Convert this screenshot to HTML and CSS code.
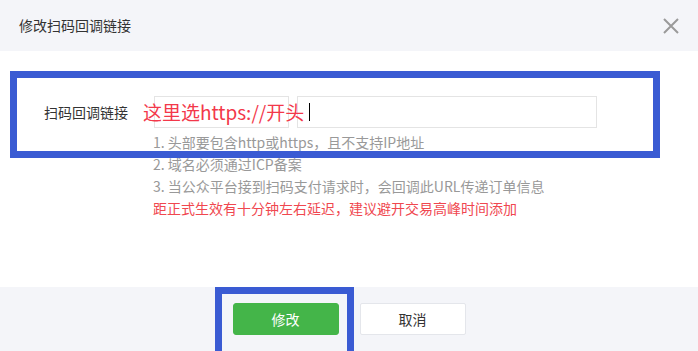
FILE: index.html
```html
<!DOCTYPE html>
<html lang="zh-CN">

<head>
    <meta charset="UTF-8">
    <meta name="viewport" content="width=device-width, initial-scale=1.0">
    <title>修改扫码回调链接</title>
    <link rel="stylesheet" href="styles.css">
</head>

<body>
    <div class="dialog">
        <div class="dialog-hd">
            <h3>修改扫码回调链接</h3>
            <span class="close">
                <svg width="16" height="16" viewBox="0 0 16 16"><path d="M1 1L15 15M15 1L1 15" stroke="#9a9a9a" stroke-width="2" fill="none"/></svg>
            </span>
        </div>
        <div class="dialog-bd">
            <div class="form-row">
                <label>扫码回调链接</label>
                <div class="field field-sm"></div>
                <div class="field field-lg"><i class="caret"></i></div>
                <!-- 标注文字 -->
                <span class="note">这里选https://开头</span>
            </div>
            <ul class="tips">
                <li>1. 头部要包含http或https，且不支持IP地址</li>
                <li>2. 域名必须通过ICP备案</li>
                <li>3. 当公众平台接到扫码支付请求时，会回调此URL传递订单信息</li>
                <li class="warn">距正式生效有十分钟左右延迟，建议避开交易高峰时间添加</li>
            </ul>
            <div class="mark mark-form"></div>
        </div>
        <div class="dialog-ft">
            <a class="btn btn-primary">修改</a>
            <a class="btn btn-default">取消</a>
            <div class="mark mark-btn"></div>
        </div>
    </div>
</body>

</html>
```
FILE: styles.css
```css
* {
    padding: 0;
    margin: 0;
}

body {
    font-family: "Noto Sans CJK SC", sans-serif;
    font-size: 14px;
    color: #333;
    background-color: #fff;
}

li {
    list-style: none;
}

.dialog {
    width: 698px;
    height: 351px;
    overflow: hidden;
}

.dialog-hd {
    position: relative;
    height: 51px;
    background-color: #f4f5f9;
    padding-left: 19px;
}

.dialog-hd h3 {
    font-size: 14px;
    font-weight: normal;
    line-height: 51px;
    color: #333;
}

.close {
    position: absolute;
    right: 19px;
    top: 18px;
    width: 16px;
    height: 16px;
}

.dialog-bd {
    position: relative;
    height: 236px;
    padding-top: 45px;
    box-sizing: border-box;
}

.form-row {
    position: relative;
    display: flex;
    align-items: center;
    height: 32px;
}

.form-row label {
    width: 128px;
    text-align: right;
    margin-right: 26px;
}

.field {
    height: 30px;
    border: 1px solid #e4e4e4;
    display: flex;
    align-items: center;
}

.field-sm {
    width: 133px;
    margin-right: 8px;
}

.field-lg {
    width: 298px;
}

.caret {
    display: block;
    width: 1px;
    height: 18px;
    margin-left: 11px;
    background-color: #000;
}

.note {
    position: absolute;
    left: 143px;
    top: 3px;
    font-size: 19px;
    line-height: 26px;
    color: #f3384a;
}

.tips {
    margin: 3px 0 0 153px;
    font-size: 14px;
    line-height: 22px;
    color: #999;
}

.tips .warn {
    color: #f0474f;
}

.mark {
    position: absolute;
    border: 7px solid #3a5bd3;
}

.mark-form {
    left: 10px;
    top: 20px;
    width: 636px;
    height: 73px;
}

.dialog-ft {
    position: relative;
    height: 64px;
    background-color: #f4f5f9;
    display: flex;
    justify-content: center;
    align-items: center;
    gap: 21px;
}

.btn {
    display: block;
    width: 104px;
    height: 30px;
    line-height: 30px;
    text-align: center;
    border-radius: 3px;
    font-size: 14px;
}

.btn-primary {
    background-color: #44b549;
    border: 1px solid #44b549;
    color: #fff;
}

.btn-default {
    background-color: #fff;
    border: 1px solid #e4e6eb;
    color: #333;
    border-radius: 2px;
}

.mark-btn {
    left: 215px;
    top: 0;
    width: 125px;
    height: 80px;
}
```
